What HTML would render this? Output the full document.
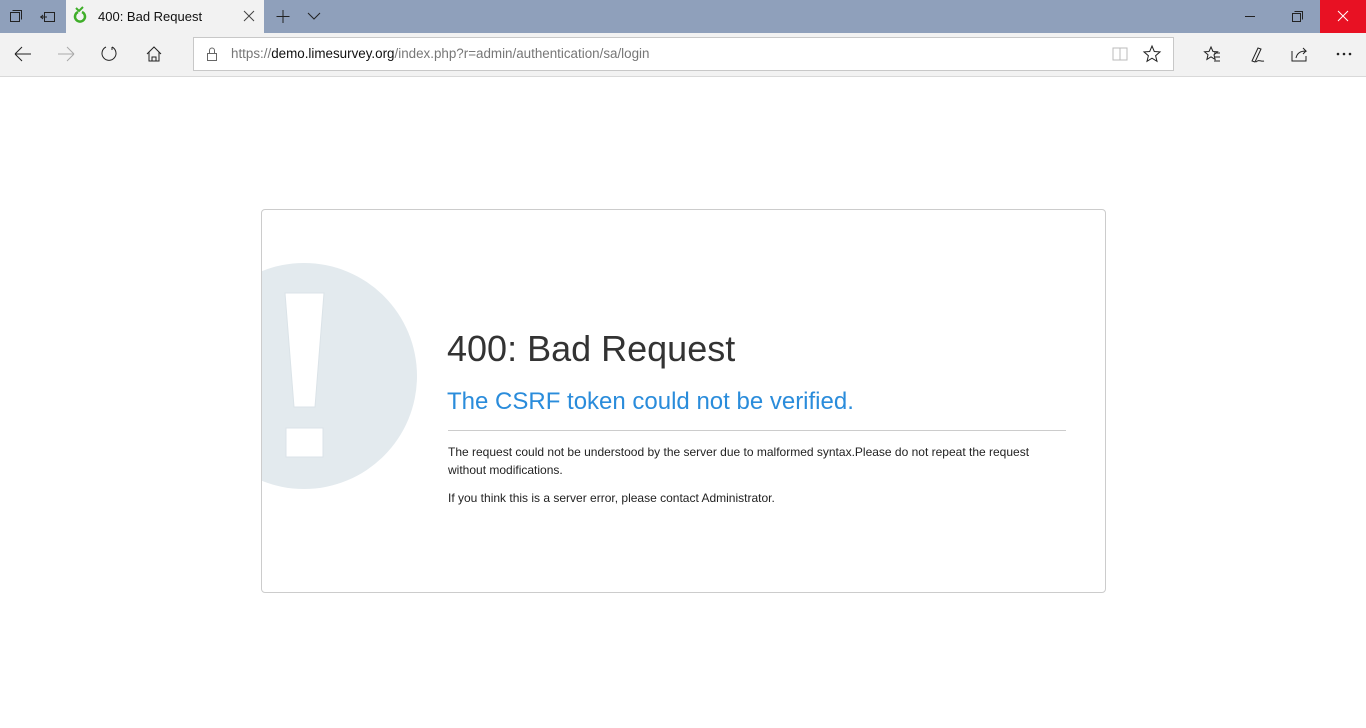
<!DOCTYPE html>
<html><head><meta charset="utf-8"><style>
*{margin:0;padding:0;box-sizing:border-box}
body{width:1366px;height:728px;overflow:hidden;background:#fff;font-family:"Liberation Sans",Arial,sans-serif;position:relative}
.a{position:absolute}
#tabs{left:0;top:0;width:1366px;height:33px;background:#8fa0bb}
#tab{left:66px;top:0;width:198px;height:33px;background:#f2f2f2}
#tool{left:0;top:33px;width:1366px;height:44px;background:#f2f2f2;border-bottom:1px solid #d9d9d9}
#addr{left:193px;top:37px;width:981px;height:34px;background:#fff;border:1px solid #c8c8c8}
#close{left:1320px;top:0;width:46px;height:33px;background:#e81123}
svg{position:absolute;overflow:visible}
.card{left:261px;top:209px;width:845px;height:384px;border:1px solid #ccc;border-radius:4px;overflow:hidden;background:#fff}
</style></head><body>
<div id="tabs" class="a"></div>
<div id="tab" class="a"></div>
<div id="close" class="a"></div>
<div id="tool" class="a"></div>
<div id="addr" class="a"></div>

<svg style="left:0;top:0" width="1366" height="77" fill="none" stroke="#222" stroke-width="1">
<rect x="10.5" y="12.5" width="9" height="9"/><path d="M12.5 10.5h9v9"/>
<rect x="44.5" y="12.5" width="10" height="9"/><path d="M40 17h7M43 15l-2 2 2 2"/>
<path d="M78 12 a5 5 0 1 0 4 0" stroke="#3fae29" stroke-width="2.5"/><path d="M76 8l3 3 4-4" stroke="#3fae29" stroke-width="2"/>
<path d="M244 11l10 10M254 11l-10 10" stroke="#444"/>
<path d="M283 10v13M276.5 16.5h13"/>
<path d="M308 13l6 6 6-6"/>
<path d="M1245 16.5h10"/>
<rect x="1292.5" y="13.5" width="8" height="8"/><path d="M1294.5 11.5h8v8"/>
<path d="M1338 11l10 10M1348 11l-10 10" stroke="#fff"/>
<path d="M15 54h16M15 54l7-7M15 54l7 7"/>
<path d="M58 54h16M74 54l-7-7M74 54l-7 7" stroke="#aaa"/>
<path d="M106 47a7 7 0 1 0 6 0"/><path d="M112 47v3"/>
<path d="M147 54l7-7 7 7M149 52v9h10v-9M152 61v-4h4v4"/>
<rect x="207.5" y="53.5" width="9" height="7" stroke="#666"/><path d="M209.5 53.5v-3a2.5 2.5 0 0 1 5 0v3" stroke="#666"/>
<path d="M1113 48h7v12h-7zM1120 48h7v12h-7z" stroke="#bbb"/>
<path d="M1152 46l2.3 5.5 5.7.4-4.4 3.8 1.4 5.6-5-3.1-5 3.1 1.4-5.6-4.4-3.8 5.7-.4z"/>
<path d="M1211 47l2 4.5 4.5.3-3.5 3 1.1 4.6-4.1-2.6-4.1 2.6 1.1-4.6-3.5-3 4.5-.3z"/><path d="M1214 53h6M1215 57h5M1214 61h6"/>
<path d="M1252 61l6-13 3 1-6 13zM1256 62c3-3 5 0 8-1"/>
<path d="M1292 51v10h14v-5"/><path d="M1296 58c1-5 5-7 10-7l-3-3M1306 51l-3 3"/>
<circle cx="1338" cy="54" r=".8" fill="#222"/><circle cx="1344" cy="54" r=".8" fill="#222"/><circle cx="1350" cy="54" r=".8" fill="#222"/>
</svg>
<div class="a" style="left:98px;top:9px;font-size:13px;color:#111">400: Bad Request</div>
<div class="a" style="left:231px;top:46px;font-size:13.4px;color:#777;white-space:nowrap">https://<span style="color:#111">demo.limesurvey.org</span>/index.php?r=admin/authentication/sa/login</div>

<div class="a card">
<svg style="left:0;top:0" width="845" height="384">
<circle cx="42" cy="166" r="113" fill="#e3eaee"/>
<path d="M23 83h39l-9 114h-21z" fill="#fff" stroke="#dbe3e8"/>
<rect x="24" y="218" width="37" height="29" fill="#fff" stroke="#dbe3e8"/>
</svg>
<div class="a" style="left:185px;top:117px;font-size:36px;color:#333;line-height:44px">400: Bad Request</div>
<div class="a" style="left:185px;top:177px;font-size:24px;color:#2a8cdb;line-height:30px">The CSRF token could not be verified.</div>
<div class="a" style="left:186px;top:220px;width:618px;height:1px;background:#ccc"></div>
<div class="a" style="left:186px;top:233px;width:610px;font-size:12px;color:#222;line-height:18px">The request could not be understood by the server due to malformed syntax.Please do not repeat the request without modifications.</div>
<div class="a" style="left:186px;top:279px;font-size:12px;color:#222;line-height:18px">If you think this is a server error, please contact Administrator.</div>
</div>
</body></html>
